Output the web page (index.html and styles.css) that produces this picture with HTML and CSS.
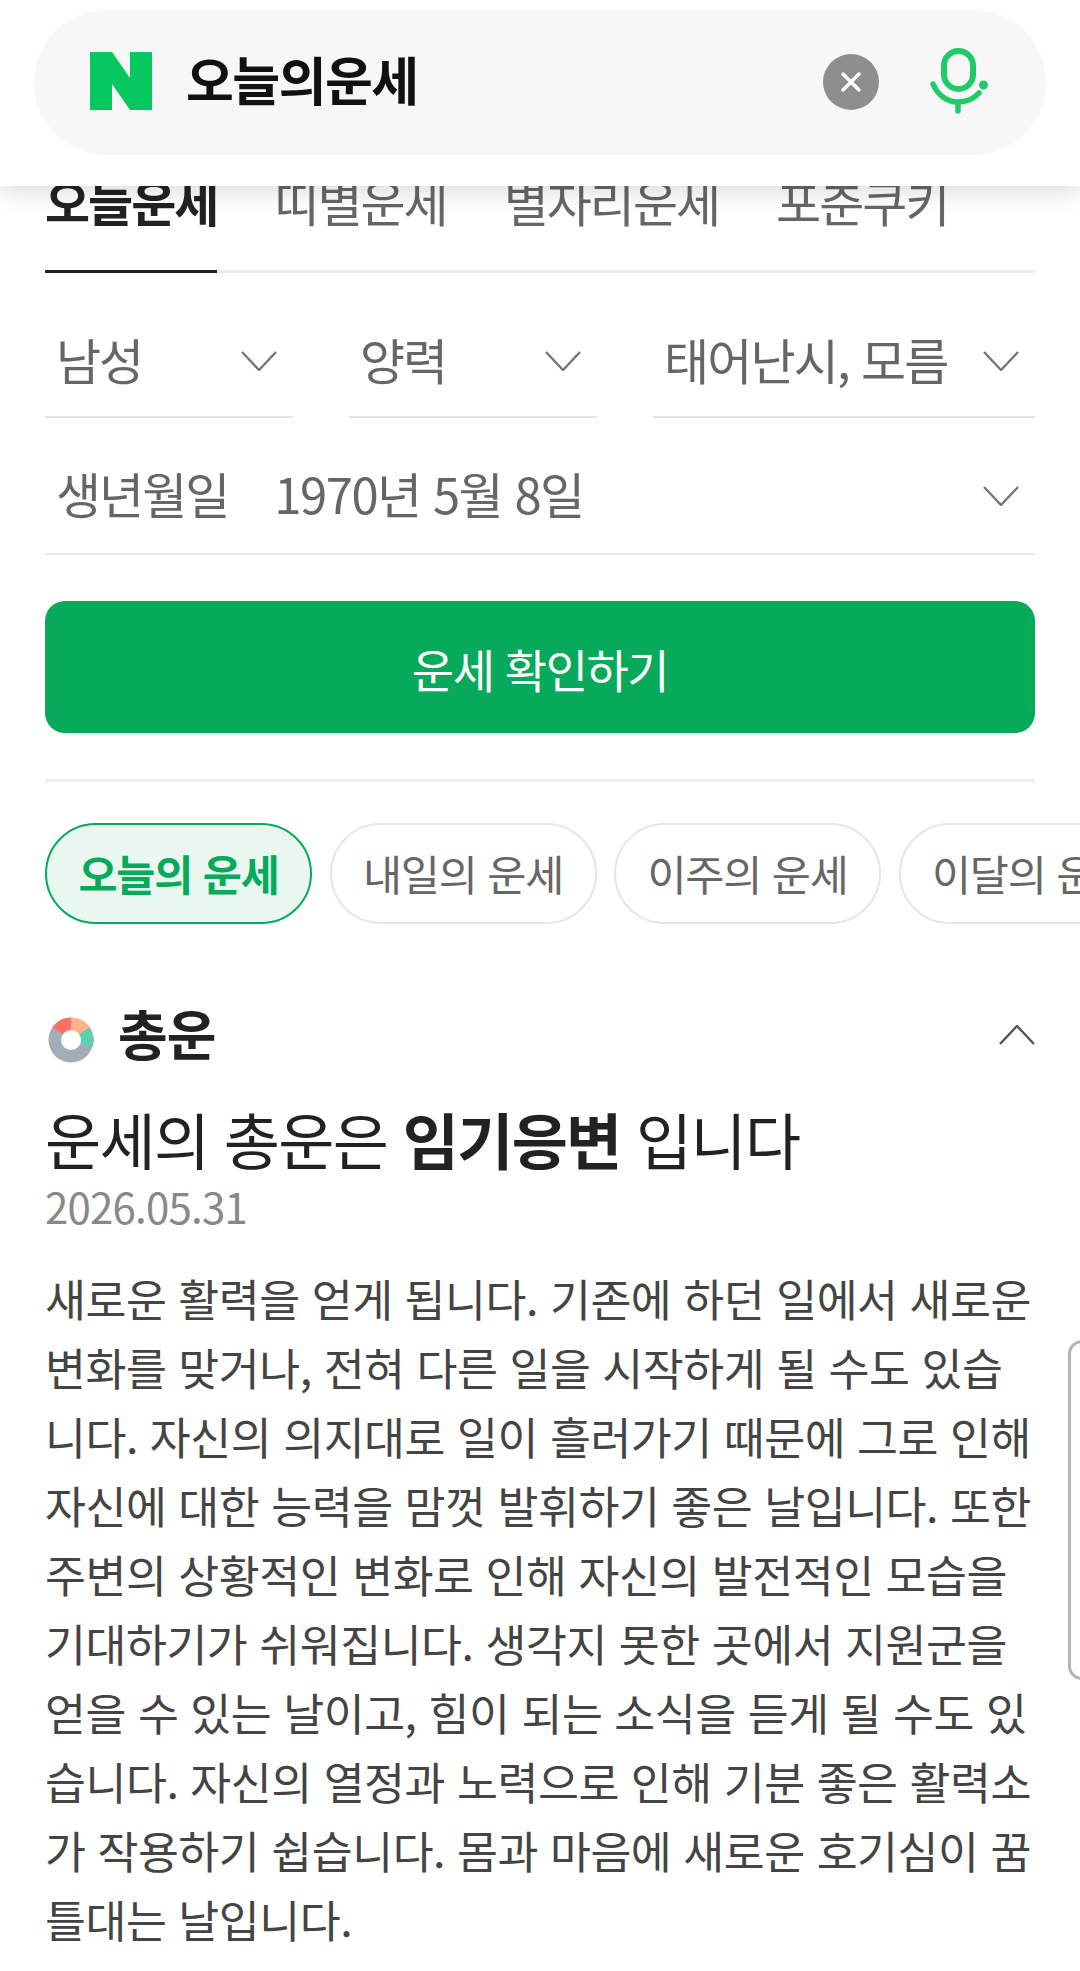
FILE: index.html
```html
<!DOCTYPE html>
<html lang="ko">
<head>
<meta charset="utf-8">
<title>오늘의운세</title>
<link rel="stylesheet" href="styles.css">
</head>
<body>
<header class="header">
  <div class="search">
    <svg class="logo" viewBox="0 0 62 58"><path d="M0 0H22L40 26V0H62V58H40L22 32V58H0Z" fill="#07c75f"/></svg>
    <div class="query">오늘의운세</div>
    <div class="clear"><svg viewBox="0 0 56 56" width="56" height="56"><path d="M20 20L36 36M36 20L20 36" stroke="#fff" stroke-width="3.4" stroke-linecap="round"/></svg></div>
    <svg class="mic" viewBox="0 0 58 66" width="58" height="66" fill="none" stroke="#1fcb68" stroke-linecap="round">
      <rect x="14" y="3" width="29" height="38" rx="14.500" stroke-width="6"/>
      <path d="M3 36C8 48 18 54 28 54C37 54 44 50.500 49 45" stroke-width="5.500"/>
      <path d="M28 55V63" stroke-width="5.500"/>
      <circle cx="53.500" cy="37" r="4.500" fill="#1fcb68" stroke="none"/>
    </svg>
  </div>
</header>
<main class="page">
  <nav class="tabs">
    <div class="tab active">오늘운세</div>
    <div class="tab">띠별운세</div>
    <div class="tab">별자리운세</div>
    <div class="tab">포춘쿠키</div>
  </nav>
  <div class="selects">
    <div class="select s1"><span>남성</span><svg class="chev" viewBox="0 0 36 20"><path d="M1 1L18 19L35 1" fill="none" stroke="#777" stroke-width="2.400"/></svg></div>
    <div class="select s2"><span>양력</span><svg class="chev" viewBox="0 0 36 20"><path d="M1 1L18 19L35 1" fill="none" stroke="#777" stroke-width="2.400"/></svg></div>
    <div class="select s3"><span class="wide">태어난시, 모름</span><svg class="chev" viewBox="0 0 36 20"><path d="M1 1L18 19L35 1" fill="none" stroke="#777" stroke-width="2.400"/></svg></div>
  </div>
  <div class="select birth"><span class="birth-label">생년월일</span><span class="birth-value">1970년 5월 8일</span><svg class="chev" viewBox="0 0 36 20"><path d="M1 1L18 19L35 1" fill="none" stroke="#777" stroke-width="2.400"/></svg></div>
  <div class="cta">운세 확인하기</div>
  <hr class="rule">
  <div class="chips">
    <div class="chip on">오늘의 운세</div>
    <div class="chip">내일의 운세</div>
    <div class="chip">이주의 운세</div>
    <div class="chip">이달의 운세</div>
  </div>
  <section class="fortune">
    <div class="fhead">
      <svg class="donut" viewBox="0 0 48 48">
        <circle cx="24" cy="24" r="23.500" fill="#a3adb8"/>
        <path d="M24 24L4.500 11A23.500 23.500 0 0 1 24 .5Z" fill="#ff6f66"/>
        <path d="M24 24V.5A23.500 23.500 0 0 1 43.500 11Z" fill="#ffb38a"/>
        <path d="M24 24L43.500 11A23.500 23.500 0 0 1 46 32Z" fill="#5dcfb4"/>
        <circle cx="24" cy="24" r="10.500" fill="#fff"/>
      </svg>
      <h2 class="ftitle">총운</h2>
      <svg class="chev up" viewBox="0 0 36 20"><path d="M1 19L18 1L35 19" fill="none" stroke="#555" stroke-width="2.400"/></svg>
    </div>
    <h3 class="headline">운세의 총운은 <b>임기응변</b> 입니다</h3>
    <div class="date">2026.05.31</div>
    <p class="body-text">새로운 활력을 얻게 됩니다. 기존에 하던 일에서 새로운<br>변화를 맞거나, 전혀 다른 일을 시작하게 될 수도 있습<br>니다. 자신의 의지대로 일이 흘러가기 때문에 그로 인해<br>자신에 대한 능력을 맘껏 발휘하기 좋은 날입니다. 또한<br>주변의 상황적인 변화로 인해 자신의 발전적인 모습을<br>기대하기가 쉬워집니다. 생각지 못한 곳에서 지원군을<br>얻을 수 있는 날이고, 힘이 되는 소식을 듣게 될 수도 있<br>습니다. 자신의 열정과 노력으로 인해 기분 좋은 활력소<br>가 작용하기 쉽습니다. 몸과 마음에 새로운 호기심이 꿈<br>틀대는 날입니다.</p>
  </section>
</main>
<div class="edge"></div>
</body>
</html>
```
FILE: styles.css
```css
* { box-sizing: border-box; }
html, body { margin: 0; padding: 0; }
body {
  width: 1080px;
  height: 1971px;
  overflow: hidden;
  position: relative;
  background: #fff;
  font-family: "Noto Sans CJK KR", "Noto Sans", sans-serif;
  color: #222;
}
.header {
  position: relative;
  z-index: 2;
  height: 186px;
  padding: 10px 34px 0;
  background: #fff;
  box-shadow: 0 4px 24px rgba(0,0,0,.16);
}
.search {
  display: flex;
  align-items: center;
  height: 145px;
  padding: 0 58px 0 56px;
  background: #f7f7f7;
  border-radius: 73px;
}
.logo { width: 62px; height: 58px; flex: none; margin-top: -4px; }
.query {
  flex: 1;
  margin-left: 34px;
  font-size: 52px;
  font-weight: 700;
  letter-spacing: -1.500px;
  color: #111;
  margin-top: -8px;
}
.clear {
  width: 56px;
  height: 56px;
  border-radius: 50%;
  background: #8e8e8e;
  flex: none;
  margin-right: 51px;
  margin-top: -2px;
}
.clear svg { display: block; }
.mic { flex: none; margin-top: -3px; }
.page { padding: 0 45px; }
.tabs {
  display: flex;
  gap: 57px;
  height: 89px;
  margin-top: -2px;
  border-bottom: 3px solid #eee;
  font-size: 49px;
  letter-spacing: -2px;
  color: #666;
}
.tab {
  height: 89px;
  line-height: 34px;
}
.tab.active {
  font-weight: 700;
  color: #222;
  border-bottom: 3px solid #222;
}
.selects {
  display: flex;
  gap: 56px;
  margin-top: 47px;
}
.select {
  display: flex;
  align-items: center;
  height: 98px;
  padding: 0 16px 14px 11px;
  border-bottom: 2px solid #e6e6e6;
  font-size: 49px;
  letter-spacing: -2px;
  color: #666;
}
.select > span { white-space: nowrap; margin-bottom: 6px; }
.s1, .s2 { width: 248px; }
.s3 { width: 382px; }
.select > .wide { letter-spacing: -1.800px; }
.chev { width: 36px; height: 20px; margin-left: auto; flex: none; }
.birth { height: 137px; padding-top: 20px; padding-bottom: 0; }
.birth-label { margin-right: 46px; }
.select > .birth-value { letter-spacing: -1.500px; }
.cta {
  height: 132px;
  margin-top: 46px;
  background: #06aa5a;
  border-radius: 20px;
  color: #fff;
  font-size: 46px;
  letter-spacing: -1.500px;
  text-align: center;
  line-height: 135px;
}
.rule {
  height: 3px;
  margin: 46px 0 0;
  border: 0;
  background: #eee;
}
.chips {
  display: flex;
  gap: 17.500px;
  margin-top: 41px;
  width: 1120px;
}
.chip {
  flex: none;
  width: 267px;
  height: 101px;
  border: 2px solid #e6e6e6;
  border-radius: 51px;
  background: #fff;
  text-align: center;
  line-height: 95px;
  font-size: 42.500px;
  letter-spacing: -1.200px;
  color: #666;
}
.chip.on {
  border-color: #06aa5a;
  background: #e9f7f0;
  color: #06aa5a;
  font-weight: 700;
}
.fortune { margin-top: 81px; }
.fhead { display: flex; align-items: center; height: 60px; }
.donut { width: 46px; height: 46px; flex: none; margin-top: 10px; margin-left: 3px; }
.ftitle {
  margin: -6px 0 0 24px;
  font-size: 54px;
  font-weight: 700;
  letter-spacing: -1px;
  color: #222;
}
.chev.up { margin-right: 0; }
.headline {
  margin: 37px 0 0;
  font-size: 61px;
  font-weight: 400;
  line-height: 74px;
  letter-spacing: -1.650px;
  color: #222;
}
.headline b { font-weight: 700; }
.date {
  margin-top: 2px;
  font-size: 42px;
  line-height: 56px;
  letter-spacing: -.800px;
  color: #888;
}
.body-text {
  margin: 29px 0 0;
  font-size: 44.500px;
  line-height: 69px;
  letter-spacing: -.480px;
  color: #444;
  white-space: nowrap;
}
.edge {
  position: absolute;
  left: 1068px;
  top: 1340px;
  width: 30px;
  height: 340px;
  border: 3px solid #b5b5b5;
  border-radius: 14px;
  background: #fff;
}
```
